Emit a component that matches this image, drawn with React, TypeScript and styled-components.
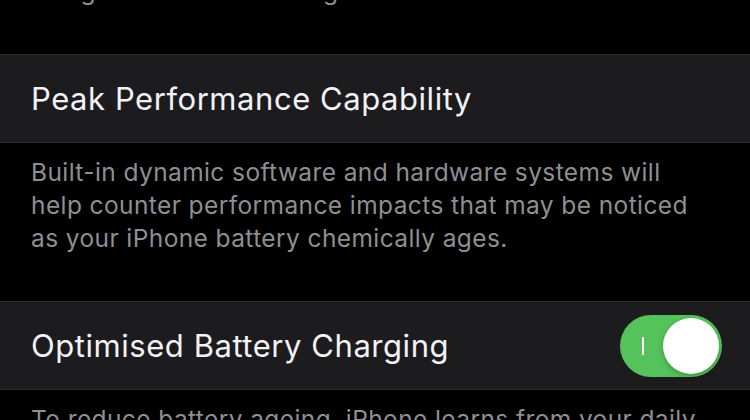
import React, { useState } from "react";
import styled, { createGlobalStyle } from "styled-components";

/* ─── Global ─────────────────────────────────────────── */
const GlobalStyle = createGlobalStyle`
  html, body {
    margin: 0;
    padding: 0;
    background: #000;
  }
  body {
    font-family: Inter, "Noto Sans", "Liberation Sans", sans-serif;
    -webkit-font-smoothing: antialiased;
  }
`;

/* ─── Layout ─────────────────────────────────────────── */
const Screen = styled.div`
  width: 750px;
  height: 420px;
  overflow: hidden;
  background: #000;
`;

/* the page is scrolled: the first footer sits partly above the top edge */
const ScrollContent = styled.div<{ $offset: number }>`
  margin-top: ${(p) => -p.$offset}px;
  display: flex;
  flex-direction: column;
`;

const Footer = styled.p`
  margin: 0;
  padding: 13px 40px 46px 31px;
  color: #8e8e93;
  font-size: 24.5px;
  line-height: 33px;
  letter-spacing: 0.4px;
`;

const Group = styled.div`
  background: #1c1c1e;
  border-top: 1px solid #2a2a2c;
  border-bottom: 1px solid #2a2a2c;
`;

const Row = styled.div`
  height: 87px;
  padding: 0 28px 0 31px;
  display: flex;
  align-items: center;
  justify-content: space-between;
`;

const Label = styled.span`
  color: #f2f2f7;
  font-size: 31px;
  letter-spacing: 0.55px;
`;

/* ─── Switch ─────────────────────────────────────────── */
const Track = styled.button<{ $on: boolean }>`
  position: relative;
  width: 102px;
  height: 62px;
  border: none;
  padding: 0;
  border-radius: 31px;
  background: ${(p) => (p.$on ? "#55c25c" : "#39393d")};
  cursor: pointer;
  transition: background 0.2s;
`;

const OnMark = styled.span`
  position: absolute;
  left: 22px;
  top: 22px;
  width: 2px;
  height: 18px;
  border-radius: 1px;
  background: #fff;
`;

const Knob = styled.span<{ $on: boolean }>`
  position: absolute;
  top: 3px;
  left: ${(p) => (p.$on ? "43px" : "3px")};
  width: 56px;
  height: 56px;
  border-radius: 50%;
  background: #fff;
  box-shadow: 0 2px 5px rgba(0, 0, 0, 0.25);
  transition: left 0.2s;
`;

function Switch() {
  const [on, setOn] = useState(true);
  return (
    <Track $on={on} onClick={() => setOn(!on)} aria-pressed={on}>
      {on && <OnMark />}
      <Knob $on={on} />
    </Track>
  );
}

export default function App() {
  return (
    <>
      <GlobalStyle />
      <Screen>
        <ScrollContent $offset={38}>
          <Footer>using the maximum charge.</Footer>

          <Group>
            <Row>
              <Label>Peak Performance Capability</Label>
            </Row>
          </Group>
          <Footer>
            Built-in dynamic software and hardware systems will help counter
            performance impacts that may be noticed as your iPhone battery
            chemically ages.
          </Footer>

          <Group>
            <Row>
              <Label>Optimised Battery Charging</Label>
              <Switch />
            </Row>
          </Group>
          <Footer>
            To reduce battery ageing, iPhone learns from your daily charging
            routine so it can wait to finish charging past 80% until you need
            to use it.
          </Footer>
        </ScrollContent>
      </Screen>
    </>
  );
}
